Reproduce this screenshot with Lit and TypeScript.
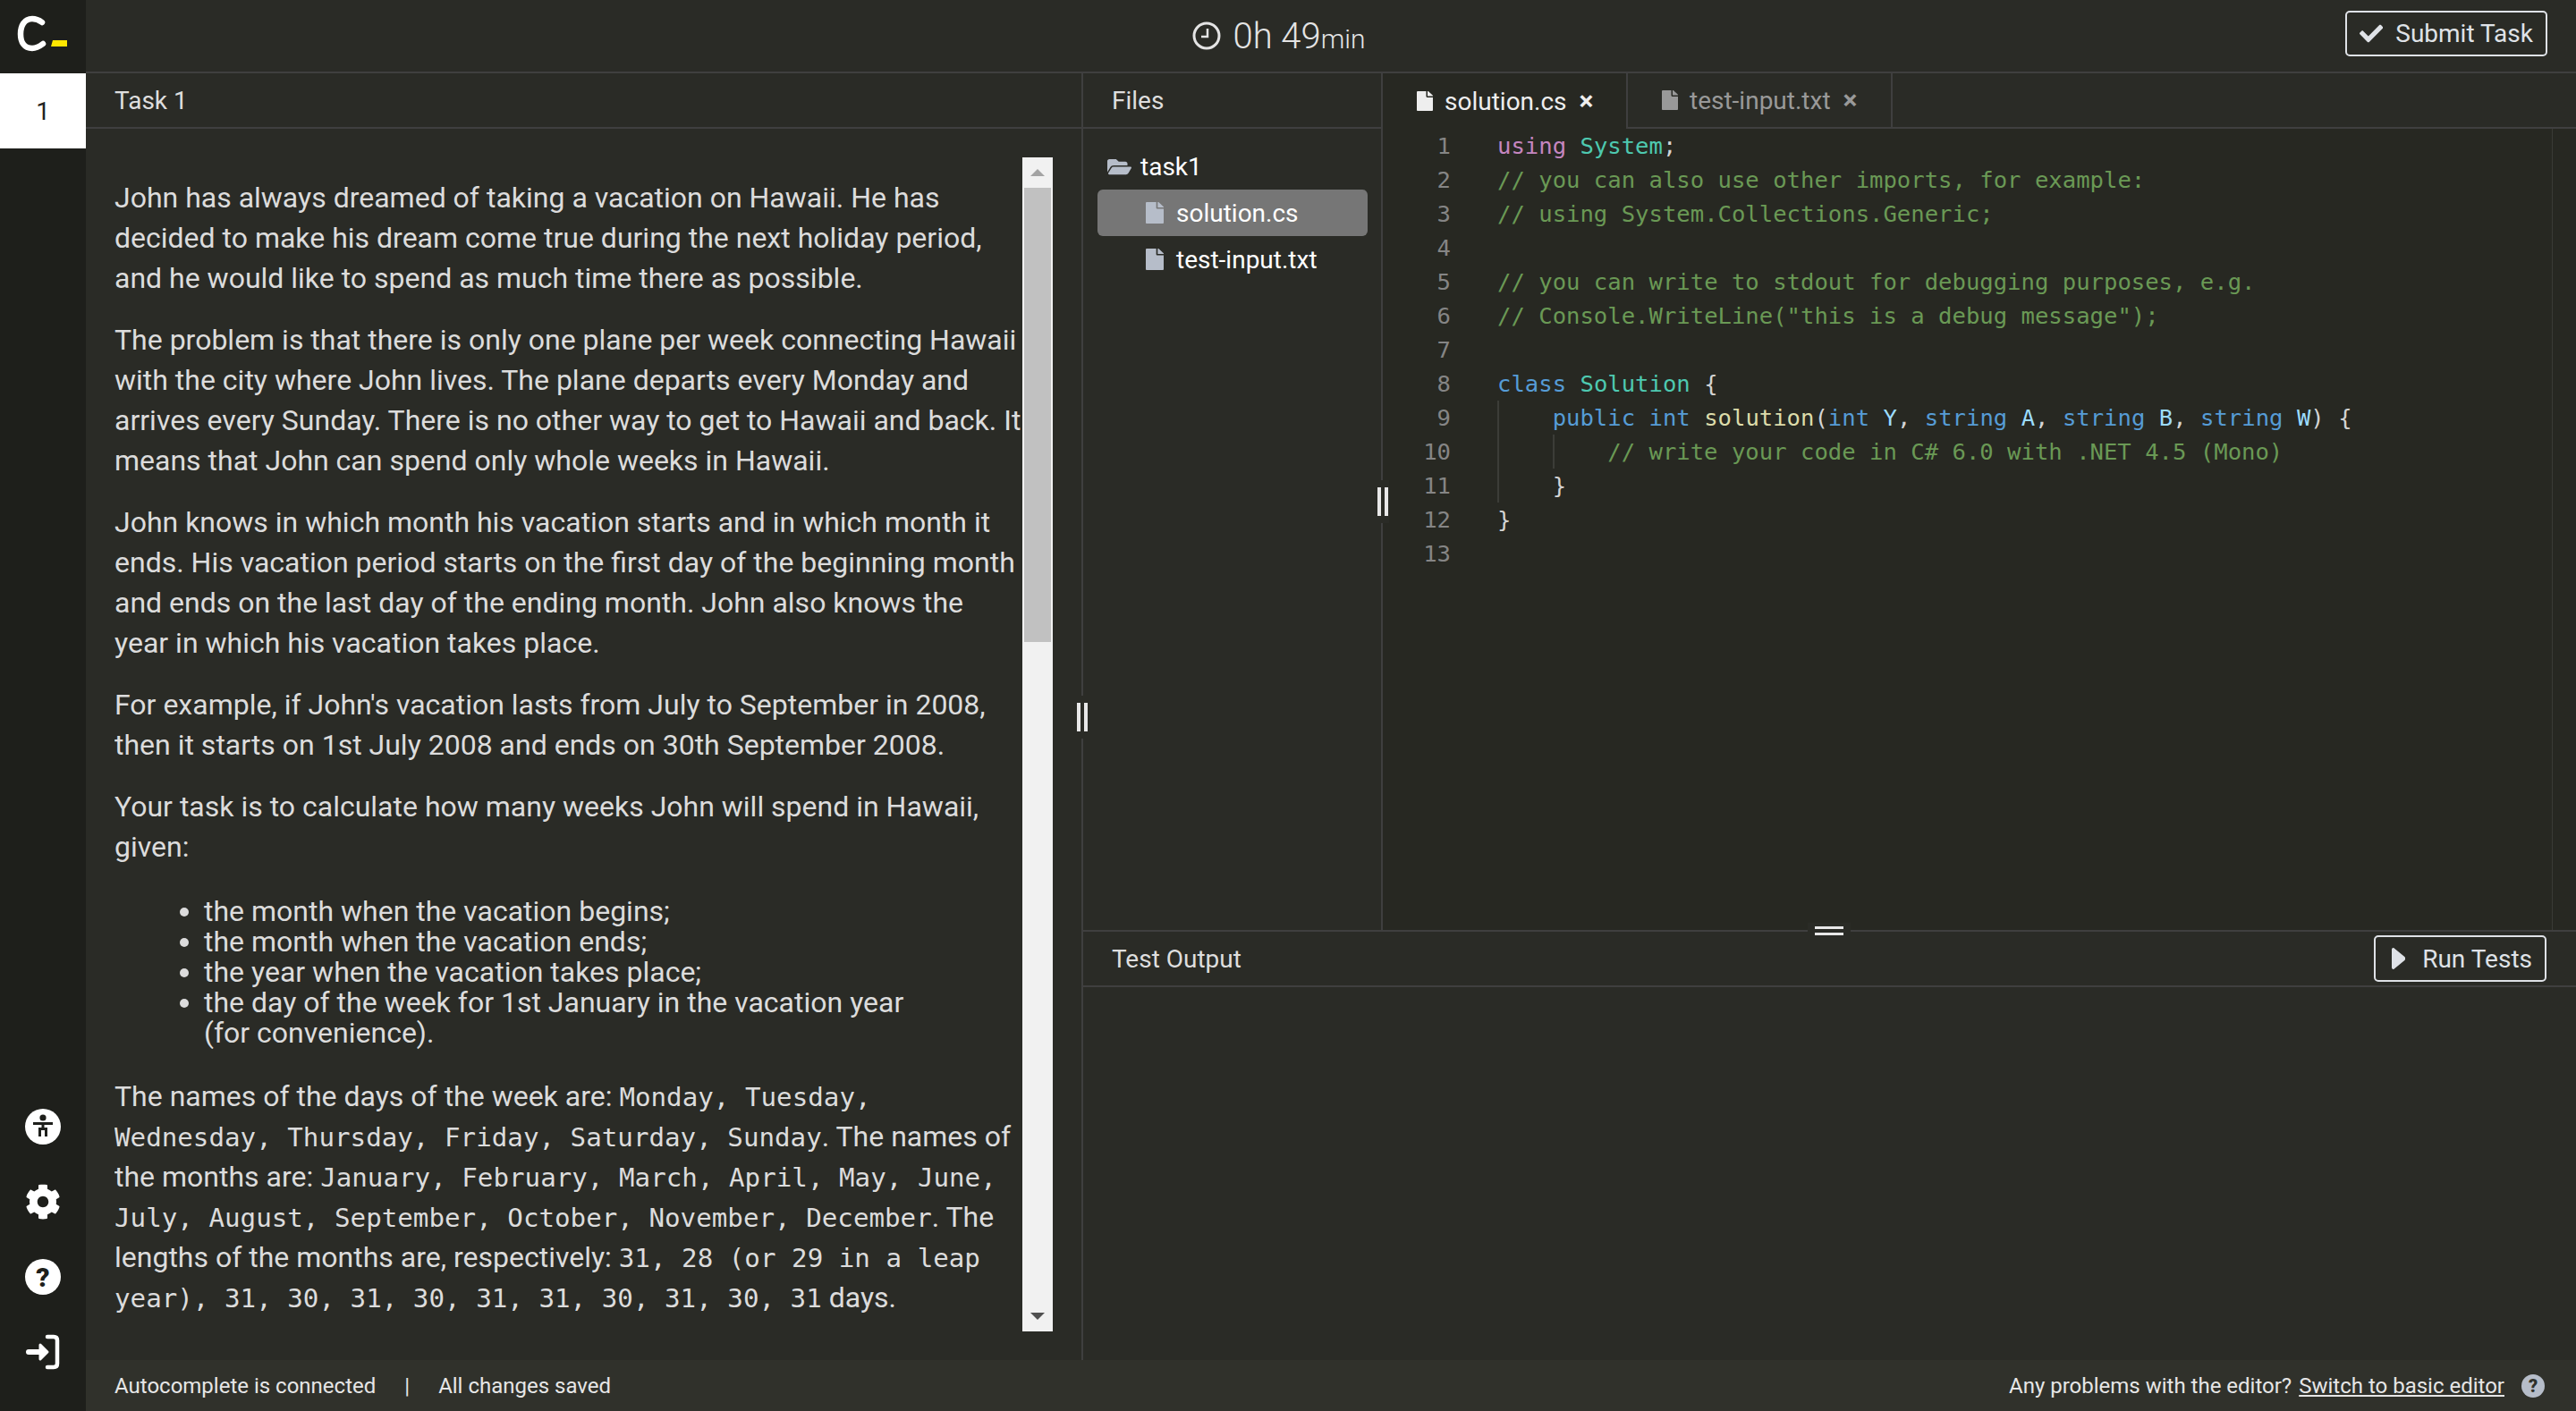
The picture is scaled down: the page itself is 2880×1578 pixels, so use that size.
import { LitElement, html, css, svg } from "lit";
import { customElement } from "lit/decorators.js";

const fileIcon = svg`<path d="M224 136V0H24C10.7 0 0 10.7 0 24v464c0 13.3 10.7 24 24 24h336c13.3 0 24-10.7 24-24V160H248c-13.2 0-24-10.8-24-24zm160-14.1v6.1H256V0h6.1c6.4 0 12.5 2.5 17 7l97.9 98c4.5 4.5 7 10.6 7 16.9z"/>`;
const file = (cls: string) => html`<svg class=${cls} viewBox="0 0 384 512" preserveAspectRatio="none" fill="currentColor">${fileIcon}</svg>`;

// each code line is a list of [class, text] tokens, indent = guide count
type Line = { indent?: number; tokens?: [string, string][] };
const code: Line[] = [
  { tokens: [["kw2", "using"], ["", " "], ["type", "System"], ["", ";"]] },
  { tokens: [["cm", "// you can also use other imports, for example:"]] },
  { tokens: [["cm", "// using System.Collections.Generic;"]] },
  {},
  { tokens: [["cm", "// you can write to stdout for debugging purposes, e.g."]] },
  { tokens: [["cm", '// Console.WriteLine("this is a debug message");']] },
  {},
  { tokens: [["kw", "class"], ["", " "], ["type", "Solution"], ["", " {"]] },
  {
    indent: 1,
    tokens: [
      ["kw", "public"], ["", " "], ["kw", "int"], ["", " "], ["fn", "solution"], ["", "("],
      ["kw", "int"], ["", " "], ["var", "Y"], ["", ", "],
      ["kw", "string"], ["", " "], ["var", "A"], ["", ", "],
      ["kw", "string"], ["", " "], ["var", "B"], ["", ", "],
      ["kw", "string"], ["", " "], ["var", "W"], ["", ") {"],
    ],
  },
  { indent: 2, tokens: [["cm", "// write your code in C# 6.0 with .NET 4.5 (Mono)"]] },
  { indent: 1, tokens: [["", "}"]] },
  { tokens: [["", "}"]] },
  {},
];

@customElement("app-root")
export class AppRoot extends LitElement {
  static styles = css`
    :host {
      display: grid;
      grid-template-columns: 96px 1fr;
      height: 100vh;
      overflow: hidden;
      background: #2a2b26;
      color: #dedede;
      font-family: Roboto, sans-serif;
      font-size: 28px;
    }
    * { box-sizing: border-box; }

    /* sidebar */
    .side {
      background: #1e1f1b;
      display: flex;
      flex-direction: column;
      align-items: center;
    }
    .logo {
      width: 96px;
      height: 82px;
      display: block;
      flex: none;
    }
    .task-num {
      width: 96px;
      height: 84px;
      background: #fff;
      color: #222;
      display: flex;
      align-items: center;
      justify-content: center;
      font-size: 28px;
    }
    .side-icons {
      margin-top: auto;
      padding-bottom: 46px;
      display: flex;
      flex-direction: column;
      align-items: center;
      gap: 44px;
      color: #fff;
    }
    .side-icons svg { width: 40px; height: 40px; display: block; }
    .qmark {
      width: 40px;
      height: 40px;
      border-radius: 50%;
      background: #fff;
      color: #1e1f1b;
      display: flex;
      align-items: center;
      justify-content: center;
      font-size: 30px;
      font-weight: 900;
    }

    /* main */
    .main {
      display: grid;
      grid-template-rows: 82px 1fr 57px;
      min-width: 0;
      min-height: 0;
    }
    .top {
      border-bottom: 2px solid #3f3f3f;
      display: flex;
      align-items: center;
      justify-content: center;
      position: relative;
    }
    .timer {
      display: flex;
      align-items: baseline;
      font-weight: 300;
      font-size: 40px;
      color: #e4e4e4;
      margin-right: 116px;
    }
    .timer svg { width: 32px; height: 32px; align-self: center; margin-right: 13px; }
    .timer small { font-size: 30px; }
    .btn {
      display: flex;
      align-items: center;
      height: 52px;
      border: 2px solid #dfe2e7;
      border-radius: 5px;
      color: #dfe2e7;
      font-size: 28px;
      padding: 0 14px;
      gap: 14px;
      white-space: nowrap;
    }
    .submit { position: absolute; right: 32px; top: 12px; height: 51px; width: 226px; }
    .submit svg { width: 27px; height: 27px; }
    .run { width: 193px; padding: 0 14px 0 18px; gap: 19px; margin-left: auto; }
    .run svg { width: 18px; height: 24px; }

    .work { display: flex; min-height: 0; }

    .task {
      width: 1115px;
      flex: none;
      border-right: 2px solid #3f3f3f;
      display: flex;
      flex-direction: column;
      position: relative;
      min-height: 0;
    }
    .head {
      height: 62px;
      flex: none;
      border-bottom: 2px solid #3f3f3f;
      display: flex;
      align-items: center;
      padding: 0 32px;
    }
    .task-body {
      flex: 1;
      display: flex;
      padding-left: 32px;
      min-height: 0;
    }
    .desc {
      width: 1015px;
      flex: none;
      padding-top: 55px;
      font-size: 32px;
      line-height: 45px;
      color: #dcdcdc;
      overflow: hidden;
    }
    .desc p { margin: 0 0 24px; }
    .desc ul { margin: 32px 0 32px; padding-left: 100px; line-height: 34px; }
    .m { font-family: "DejaVu Sans Mono", monospace; font-size: 29.2px; line-height: 1; }

    .scroll {
      width: 34px;
      height: 1313px;
      flex: none;
      margin-top: 32px;
      background: #f1f1f1;
      display: flex;
      flex-direction: column;
      align-items: center;
    }
    .arrow { height: 34px; flex: none; display: flex; align-items: center; justify-content: center; }
    .up { width: 0; height: 0; border: 8px solid transparent; border-top: 0; border-bottom: 8px solid #a3a3a3; }
    .down { width: 0; height: 0; border: 8px solid transparent; border-bottom: 0; border-top: 8px solid #505050; }
    .thumb { width: 30px; height: 508px; background: #c1c1c1; }
    .track { flex: 1; }

    .handle-v {
      position: absolute;
      right: -8px;
      width: 14px;
      height: 48px;
      background: #2a2b26;
      display: flex;
      justify-content: center;
      align-items: center;
      gap: 4px;
      z-index: 2;
    }
    .handle-v i { display: block; width: 4px; height: 32px; background: #e8e8e8; }
    .handle-left { top: 696px; }
    .handle-mid { top: 455px; right: -9px; }

    .right {
      flex: 1;
      display: flex;
      flex-direction: column;
      min-width: 0;
    }
    .upper {
      height: 958px;
      flex: none;
      display: flex;
      position: relative;
    }
    .files {
      width: 335px;
      flex: none;
      border-right: 2px solid #3f3f3f;
      position: relative;
      display: flex;
      flex-direction: column;
      color: #fff;
    }
    .files .head { color: #dedede; }
    .tree { padding: 16px 15px 0 16px; }
    .row {
      height: 52px;
      display: flex;
      align-items: center;
      border-radius: 6px;
    }
    .folder { padding-left: 11px; gap: 10px; }
    .folder svg { width: 27px; height: 23px; color: #b6bdc9; }
    .leaf { padding-left: 54px; gap: 14px; }
    .leaf svg { width: 20px; height: 24px; color: #b6bdc9; flex: none; }
    .row.sel { background: #767676; }

    .editor {
      flex: 1;
      display: flex;
      flex-direction: column;
      background: #272822;
      min-width: 0;
    }
    .tabs {
      height: 62px;
      flex: none;
      display: flex;
      background: #2a2b26;
    }
    .tab {
      display: flex;
      align-items: center;
      border-right: 2px solid #3f3f3f;
      border-bottom: 2px solid #3f3f3f;
      color: #999;
      padding-left: 38px;
    }
    .tab.on { width: 274px; border-bottom: 0; background: #272822; color: #eee; }
    .tab.off { width: 296px; padding-left: 38px; }
    .tab svg.f { width: 18px; height: 22px; margin-right: 13px; }
    .tab .x { margin-left: 14px; font-size: 30px; font-weight: 700; line-height: 1; }
    .tabs-rest { flex: 1; border-bottom: 2px solid #3f3f3f; }

    .code {
      flex: 1;
      position: relative;
      font-family: "DejaVu Sans Mono", monospace;
      font-size: 25.6px;
      line-height: 38px;
      color: #d4d4d4;
    }
    .line { display: flex; height: 38px; white-space: pre; }
    .num { width: 76px; flex: none; text-align: right; color: #858585; margin-right: 52px; }
    .guide {
      display: inline-block;
      width: 4ch;
      height: 38px;
      vertical-align: top;
      box-shadow: inset 2px 0 #3c3d38;
    }
    .kw { color: #569cd6; }
    .kw2 { color: #c586c0; }
    .type { color: #4ec9b0; }
    .fn { color: #dcdcaa; }
    .var { color: #9cdcfe; }
    .cm { color: #6a9955; }
    .ruler {
      position: absolute;
      top: 0;
      bottom: 0;
      right: 26px;
      width: 1px;
      background: #3a3b36;
    }

    .output { flex: 1; position: relative; }
    .out-head {
      height: 64px;
      border-top: 2px solid #3f3f3f;
      border-bottom: 2px solid #3f3f3f;
      display: flex;
      align-items: center;
      padding: 0 33px 0 32px;
    }
    .handle-h {
      position: absolute;
      top: -8px;
      left: 810px;
      width: 48px;
      height: 18px;
      background: #2a2b26;
      display: flex;
      flex-direction: column;
      align-items: center;
      justify-content: center;
      gap: 4px;
    }
    .handle-h i { display: block; width: 32px; height: 3px; background: #e8e8e8; }

    .foot {
      background: #30312b;
      display: flex;
      align-items: center;
      padding: 0 35px 0 32px;
      font-size: 24px;
      color: #e6e6e6;
    }
    .sep { margin: 0 32px; }
    .foot a { color: inherit; text-decoration: underline; margin-left: 8px; }
    .help {
      width: 26px;
      height: 26px;
      border-radius: 50%;
      background: #b6bdc9;
      color: #30312b;
      display: flex;
      align-items: center;
      justify-content: center;
      font-size: 20px;
      font-weight: 900;
      margin-left: 19px;
    }
    .push { margin-left: auto; }
  `;

  render() {
    return html`
      <div class="side">
        <svg class="logo" viewBox="0 0 96 82">
          <path d="M47 25 C43 22 39 21 36 21 C27 21 23 29 23 38 C23 47 27 54 36 54 C40 54 44 52 48 49" fill="none" stroke="#fff" stroke-width="6.5" stroke-linecap="round"/>
          <path d="M59 45 H75 V52 H57 Z" fill="#ffe600"/>
        </svg>
        <div class="task-num">1</div>
        <div class="side-icons">
          <svg viewBox="0 0 40 40">
            <circle cx="20" cy="20" r="20" fill="#fff"/>
            <circle cx="20" cy="10" r="3.6" fill="#1e1f1b"/>
            <path d="M9 16.5 H31 M20 16.5 V24 M16.5 31 V22.5 H23.5 V31" fill="none" stroke="#1e1f1b" stroke-width="3"/>
          </svg>
          <svg viewBox="0 0 512 512" fill="currentColor">
            <path d="M487.4 315.7l-42.6-24.6c4.3-23.2 4.3-47 0-70.2l42.6-24.6c4.9-2.8 7.1-8.6 5.5-14-11.1-35.6-30-67.8-54.7-94.6-3.8-4.1-10-5.1-14.8-2.3L380.8 110c-17.9-15.4-38.5-27.3-60.8-35.1V25.8c0-5.6-3.9-10.5-9.4-11.7-36.7-8.2-74.3-7.8-109.2 0-5.5 1.2-9.4 6.1-9.4 11.7V75c-22.2 7.9-42.8 19.8-60.8 35.1L88.7 85.5c-4.9-2.8-11-1.9-14.8 2.3-24.7 26.7-43.6 58.9-54.7 94.6-1.7 5.4.6 11.2 5.5 14L67.3 221c-4.3 23.2-4.3 47 0 70.2l-42.6 24.6c-4.9 2.8-7.1 8.6-5.5 14 11.1 35.6 30 67.8 54.7 94.6 3.8 4.1 10 5.1 14.8 2.3l42.6-24.6c17.9 15.4 38.5 27.3 60.8 35.1v49.2c0 5.6 3.9 10.5 9.4 11.7 36.7 8.2 74.3 7.8 109.2 0 5.5-1.2 9.4-6.1 9.4-11.7v-49.2c22.2-7.9 42.8-19.8 60.8-35.1l42.6 24.6c4.9 2.8 11 1.9 14.8-2.3 24.7-26.7 43.6-58.9 54.7-94.6 1.5-5.5-.7-11.3-5.6-14.1zM256 336c-44.1 0-80-35.9-80-80s35.9-80 80-80 80 35.9 80 80-35.9 80-80 80z"/>
          </svg>
          <div class="qmark">?</div>
          <svg viewBox="0 0 40 40" fill="none" stroke="currentColor" stroke-linecap="round" stroke-linejoin="round">
            <path d="M25 3 H32 Q36 3 36 7 V33 Q36 37 32 37 H25" stroke-width="4.5"/>
            <path d="M4 20 H20" stroke-width="6"/>
            <path d="M17 12 L25 20 L17 28 Z" fill="currentColor" stroke-width="3"/>
          </svg>
        </div>
      </div>

      <div class="main">
        <div class="top">
          <div class="timer">
            <svg viewBox="0 0 32 32" fill="none" stroke="currentColor" stroke-width="3">
              <circle cx="16" cy="16" r="14"/>
              <path d="M17 8 V17 H10" stroke-width="2.5"/>
            </svg>
            <span>0h 49<small>min</small></span>
          </div>
          <div class="btn submit">
            <svg viewBox="0 0 512 512" fill="currentColor">
              <path d="M173.898 439.404l-166.4-166.4c-9.997-9.997-9.997-26.206 0-36.204l36.203-36.204c9.997-10 26.207-10 36.204 0L192 312.69 432.095 72.596c9.997-9.997 26.207-9.997 36.204 0l36.203 36.204c9.997 9.997 9.997 26.206 0 36.204l-294.4 294.401c-9.998 9.997-26.207 9.997-36.204-.001z"/>
            </svg>
            Submit Task
          </div>
        </div>

        <div class="work">
          <div class="task">
            <div class="head">Task 1</div>
            <div class="task-body">
              <div class="desc">
                <p>John has always dreamed of taking a vacation on Hawaii. He has decided to make his dream come true during the next holiday period, and he would like to spend as much time there as possible.</p>
                <p>The problem is that there is only one plane per week connecting Hawaii with the city where John lives. The plane departs every Monday and arrives every Sunday. There is no other way to get to Hawaii and back. It means that John can spend only whole weeks in Hawaii.</p>
                <p>John knows in which month his vacation starts and in which month it ends. His vacation period starts on the first day of the beginning month and ends on the last day of the ending month. John also knows the year in which his vacation takes place.</p>
                <p>For example, if John's vacation lasts from July to September in 2008, then it starts on 1st July 2008 and ends on 30th September 2008.</p>
                <p>Your task is to calculate how many weeks John will spend in Hawaii, given:</p>
                <ul>
                  <li>the month when the vacation begins;</li>
                  <li>the month when the vacation ends;</li>
                  <li>the year when the vacation takes place;</li>
                  <li>the day of the week for 1st January in the vacation year<br />(for convenience).</li>
                </ul>
                <p>The names of the days of the week are: <span class="m">Monday, Tuesday, Wednesday, Thursday, Friday, Saturday, Sunday</span>. The names of the months are: <span class="m">January, February, March, April, May, June, July, August, September, October, November, December</span>. The lengths of the months are, respectively: <span class="m">31, 28 (or 29 in a leap year), 31, 30, 31, 30, 31, 31, 30, 31, 30, 31</span> days.</p>
              </div>
              <div class="scroll">
                <div class="arrow"><div class="up"></div></div>
                <div class="thumb"></div>
                <div class="track"></div>
                <div class="arrow"><div class="down"></div></div>
              </div>
            </div>
            <div class="handle-v handle-left"><i></i><i></i></div>
          </div>

          <div class="right">
            <div class="upper">
              <div class="files">
                <div class="head">Files</div>
                <div class="tree">
                  <div class="row folder">
                    <svg viewBox="0 0 576 512" preserveAspectRatio="none" fill="currentColor">
                      <path d="M572.694 292.093L500.27 416.248A63.997 63.997 0 0 1 444.989 448H45.025c-18.523 0-30.064-20.093-20.731-36.093l72.424-124.155A64 64 0 0 1 152 256h399.964c18.523 0 30.064 20.093 20.73 36.093zM152 224h328v-48c0-26.51-21.49-48-48-48H272l-64-64H48C21.49 64 0 85.49 0 112v278.046l69.077-118.418C86.214 242.25 117.989 224 152 224z"/>
                    </svg>
                    task1
                  </div>
                  <div class="row leaf sel">${file("")}solution.cs</div>
                  <div class="row leaf">${file("")}test-input.txt</div>
                </div>
                <div class="handle-v handle-mid"><i></i><i></i></div>
              </div>
              <div class="editor">
                <div class="tabs">
                  <div class="tab on">${file("f")}solution.cs<span class="x">×</span></div>
                  <div class="tab off">${file("f")}test-input.txt<span class="x">×</span></div>
                  <div class="tabs-rest"></div>
                </div>
                <div class="code">
                  ${code.map(
                    (l, i) => html`<div class="line"><span class="num">${i + 1}</span><span>${Array.from({ length: l.indent ?? 0 }, () => html`<span class="guide"></span>`)}${(l.tokens ?? []).map(([c, t]) => html`<span class=${c}>${t}</span>`)}</span></div>`
                  )}
                  <div class="ruler"></div>
                </div>
              </div>
            </div>
            <div class="output">
              <div class="out-head">
                Test Output
                <div class="btn run">
                  <svg viewBox="0 0 448 512" preserveAspectRatio="none" fill="currentColor">
                    <path d="M424.4 214.7L72.4 6.6C43.8-10.3 0 6.1 0 47.9V464c0 37.5 40.7 60.1 72.4 41.3l352-208c31.4-18.5 31.5-64.1 0-82.6z"/>
                  </svg>
                  Run Tests
                </div>
              </div>
              <div class="handle-h"><i></i><i></i></div>
            </div>
          </div>
        </div>

        <div class="foot">
          <span>Autocomplete is connected</span>
          <span class="sep">|</span>
          <span>All changes saved</span>
          <span class="push">Any problems with the editor?</span>
          <a>Switch to basic editor</a>
          <span class="help">?</span>
        </div>
      </div>
    `;
  }
}
